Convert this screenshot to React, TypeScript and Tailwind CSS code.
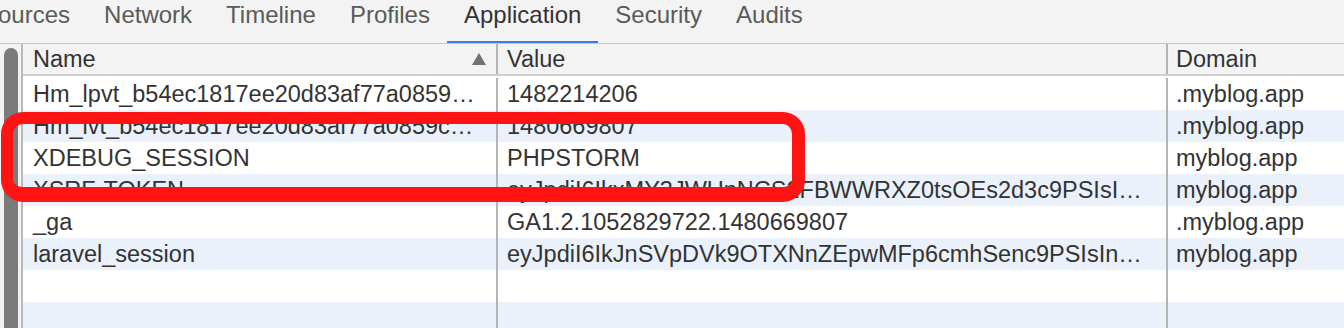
import React from "react";

const tabs = ["Sources", "Network", "Timeline", "Profiles", "Application", "Security", "Audits"];

const rows: [string, string, string][] = [
  ["Hm_lpvt_b54ec1817ee20d83af77a0859…", "1482214206", ".myblog.app"],
  ["Hm_lvt_b54ec1817ee20d83af77a0859c…", "1480669807", ".myblog.app"],
  ["XDEBUG_SESSION", "PHPSTORM", "myblog.app"],
  ["XSRF-TOKEN", "eyJpdiI6IkxMY3JWUnNCS2FBWWRXZ0tsOEs2d3c9PSIsI…", "myblog.app"],
  ["_ga", "GA1.2.1052829722.1480669807", ".myblog.app"],
  ["laravel_session", "eyJpdiI6IkJnSVpDVk9OTXNnZEpwMFp6cmhSenc9PSIsIn…", "myblog.app"],
  ["", "", ""],
  ["", "", ""],
];

export default function App() {
  return (
    <div className="relative w-[1344px] h-[328px] overflow-hidden bg-white font-['Liberation_Sans',Arial,sans-serif]">
      {/* Tab bar */}
      <div className="flex h-[44px] bg-[#f3f3f3] border-b border-[#c9c9c9] overflow-hidden">
        <div className="flex ml-[-35px] h-full">
          {tabs.map((t) => (
            <div
              key={t}
              className={
                t === "Application"
                  ? "h-full px-[17px] pt-[1px] text-[24px] leading-[28px] whitespace-nowrap text-[#333333] border-b-2 border-[#3b7ddd]"
                  : "h-full px-[17px] pt-[1px] text-[24px] leading-[28px] whitespace-nowrap text-[#5a5a5a] border-b-2 border-transparent"
              }
            >
              {t}
            </div>
          ))}
        </div>
      </div>

      {/* Body */}
      <div className="flex h-[284px]">
        {/* Gutter with scrollbar */}
        <div className="w-[23px] shrink-0 bg-[#f3f3f3] border-r-2 border-[#b9b9b9] pt-[4px] pl-[4px]">
          <div className="w-[14px] h-full rounded-t-[7px] bg-[#7b7b7b]" />
        </div>

        {/* Table */}
        <div className="flex-1 flex flex-col text-[23.5px] text-[#333333] overflow-hidden">
          {/* Header */}
          <div className="flex h-[32px] shrink-0 bg-[#f3f3f3] border-b-2 border-[#cfcfcf] leading-[30px]">
            <div className="w-[475px] shrink-0 flex items-center justify-between pl-[10px] pr-[10px] border-r-2 border-[#b4b4b4]">
              <span>Name</span>
              <svg width="14" height="12" viewBox="0 0 14 12" className="mb-[1px]">
                <polygon points="7,0 14,12 0,12" fill="#727272" />
              </svg>
            </div>
            <div className="w-[670px] shrink-0 pl-[9px] border-r-2 border-[#b4b4b4]">Value</div>
            <div className="flex-1 pl-[8px] whitespace-nowrap">Domain</div>
          </div>

          {/* Rows */}
          {rows.map((r, i) => (
            <div
              key={i}
              className={
                (i % 2 === 1 ? "bg-[#ebf1fb] " : "bg-white ") +
                (i === 0 ? "h-[34px] pt-[2px] " : "h-[32px] ") +
                "flex shrink-0 leading-[32px]"
              }
            >
              <div className="w-[475px] shrink-0 pl-[10px] pr-[8px] border-r-2 border-[#b4b4b4] whitespace-nowrap overflow-hidden">
                {r[0]}
              </div>
              <div className="w-[670px] shrink-0 pl-[9px] pr-[8px] border-r-2 border-[#b4b4b4] whitespace-nowrap overflow-hidden">
                {r[1]}
              </div>
              <div className="flex-1 pl-[8px] whitespace-nowrap overflow-hidden">{r[2]}</div>
            </div>
          ))}
        </div>
      </div>

      {/* Red annotation box */}
      <div className="absolute left-[1px] top-[112px] w-[804px] h-[90px] rounded-[22px] border-solid border-[#ff1414] border-t-[12px] border-b-[15px] border-l-[12px] border-r-[13px]" />
    </div>
  );
}
